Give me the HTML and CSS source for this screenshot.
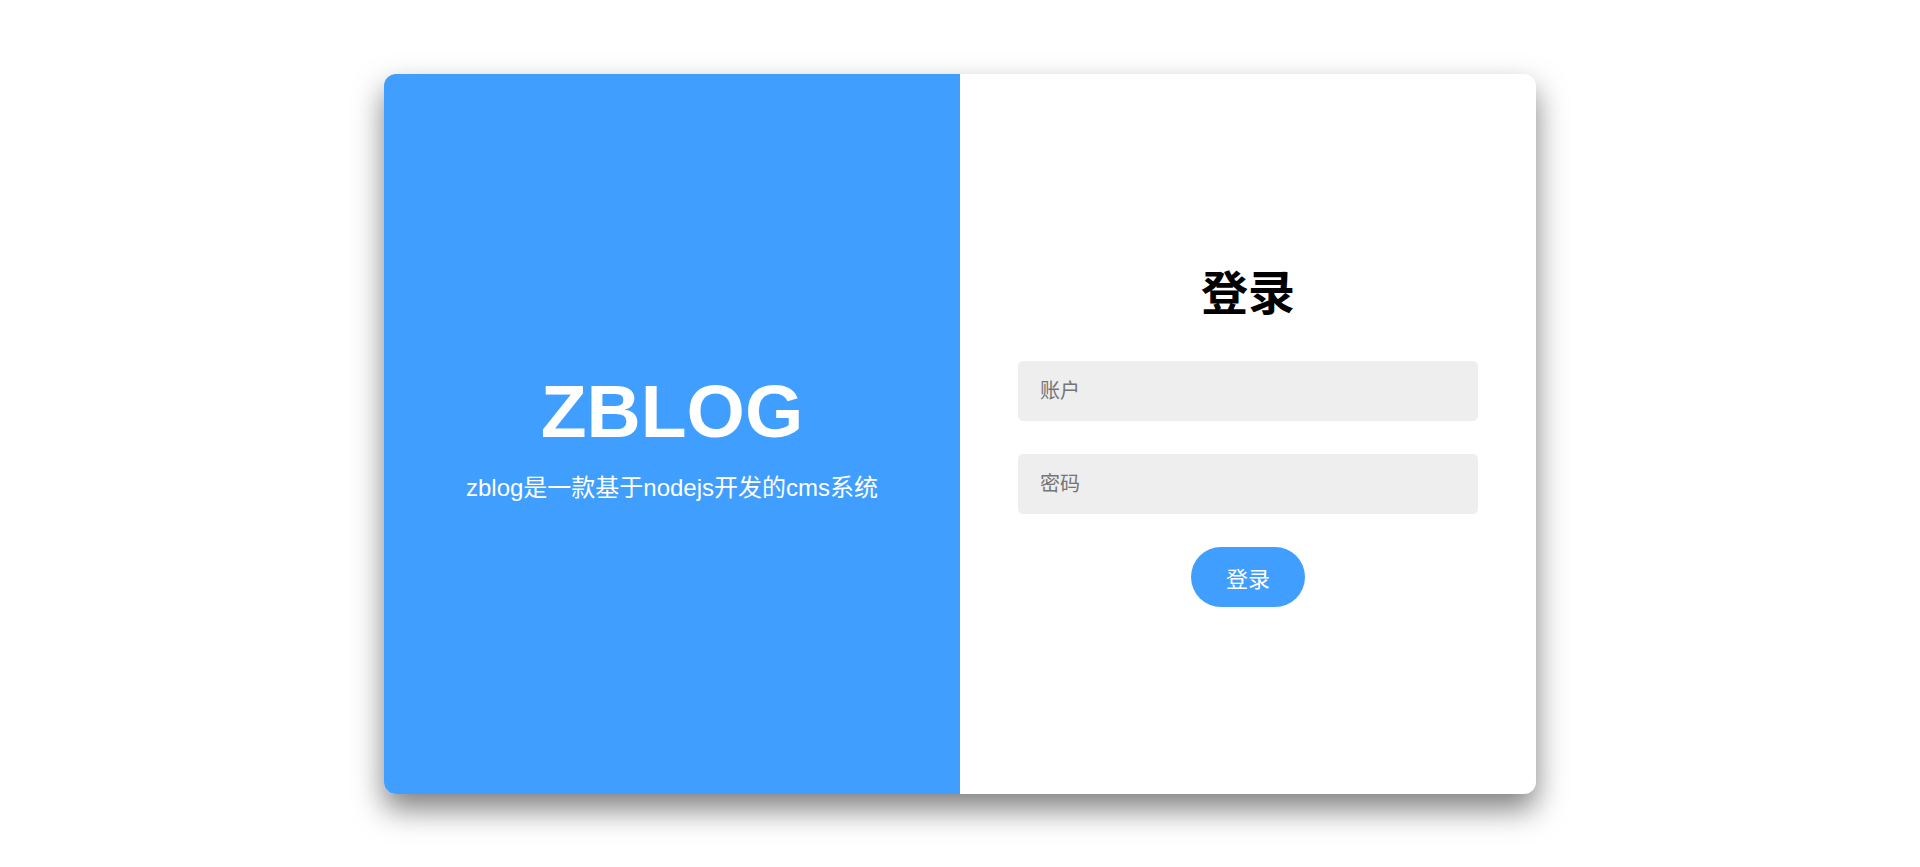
FILE: index.html
```html
<!DOCTYPE html>
<html lang="zh-CN">
<head>
<meta charset="utf-8">
<title>ZBLOG 登录</title>
<link rel="stylesheet" href="styles.css">
</head>
<body>
<div class="page">
  <div class="card">
    <section class="intro">
      <h1 class="brand">ZBLOG</h1>
      <p class="tagline">zblog是一款基于nodejs开发的cms系统</p>
    </section>
    <section class="login">
      <h2 class="login-title">登录</h2>
      <input class="field" type="text" placeholder="账户">
      <input class="field" type="password" placeholder="密码">
      <button class="submit" type="button">登录</button>
    </section>
  </div>
</div>
</body>
</html>
```

FILE: styles.css
```css
html, body {
  margin: 0;
  padding: 0;
  background: #fff;
  font-family: "Liberation Sans", "Noto Sans CJK SC", sans-serif;
}

.page {
  height: 100vh;
  display: flex;
  align-items: center;
  justify-content: center;
}

.card {
  width: 1152px;
  height: 720px;
  display: flex;
  border-radius: 12px;
  overflow: hidden;
  background: #fff;
  box-shadow: 0 15px 30px rgba(0, 0, 0, 0.5);
}

.intro {
  flex: 1;
  box-sizing: border-box;
  padding-top: 4px;
  background: #409eff;
  color: #fff;
  display: flex;
  flex-direction: column;
  align-items: center;
  justify-content: center;
}

.brand {
  margin: 0;
  font-size: 75px;
  line-height: 86px;
  font-weight: bold;
}

.tagline {
  margin: 19px 0 0;
  font-size: 24px;
  line-height: 30px;
}

.login {
  flex: 1;
  box-sizing: border-box;
  padding-top: 4px;
  display: flex;
  flex-direction: column;
  align-items: center;
  justify-content: center;
}

.login-title {
  margin: 0 0 37px;
  font-size: 47px;
  line-height: 60px;
  font-weight: bold;
  color: #000;
}

.field {
  box-sizing: border-box;
  width: 460px;
  height: 60px;
  border: none;
  outline: none;
  border-radius: 5px;
  background: #eee;
  padding: 0 22px;
  font-family: inherit;
  font-size: 20px;
  color: #333;
  margin-bottom: 33px;
}

.field::placeholder {
  color: #757575;
}

.submit {
  width: 114px;
  height: 60px;
  border: none;
  border-radius: 30px;
  background: #409eff;
  color: #fff;
  font-family: inherit;
  font-size: 22px;
  cursor: pointer;
}
```
